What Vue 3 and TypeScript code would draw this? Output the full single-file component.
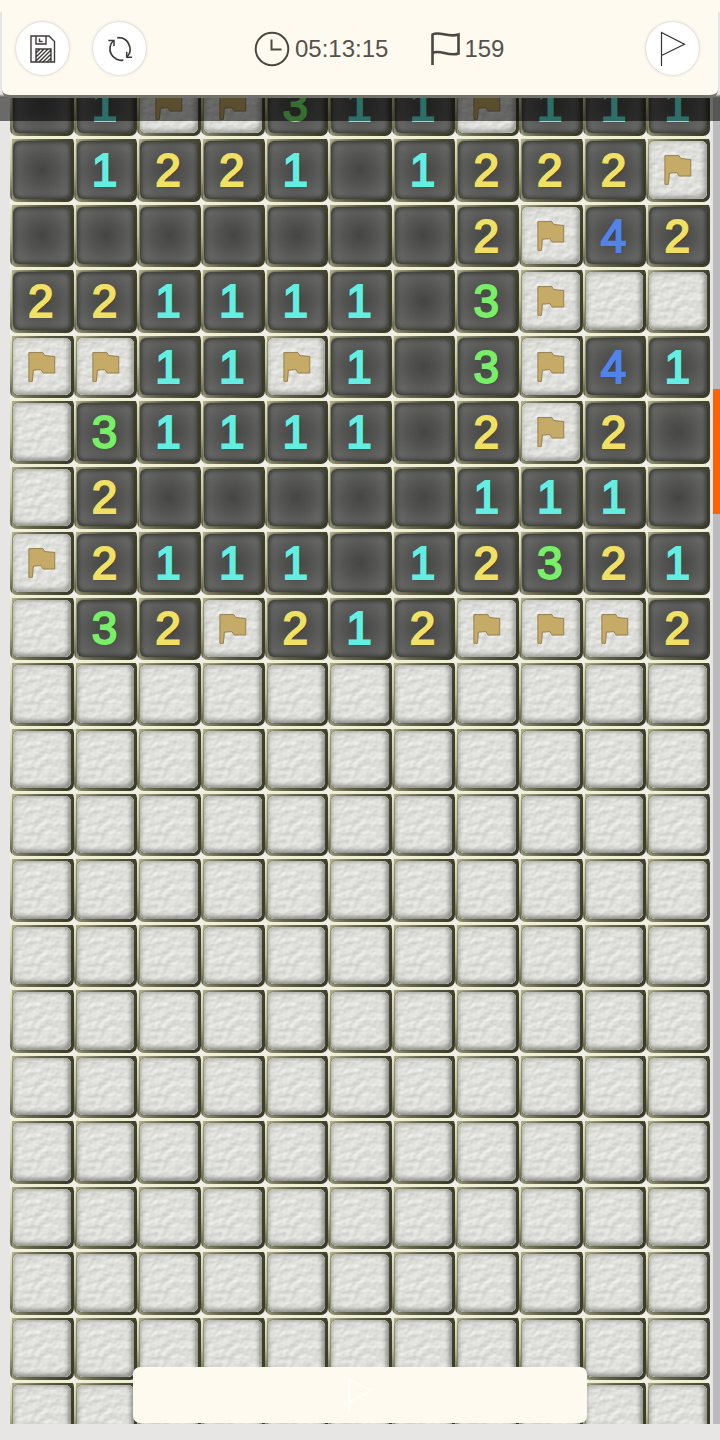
<script setup lang="ts">
import { computed, ref } from 'vue'

type Kind = 'covered' | 'flagged' | 'open'
interface Tile {
  id: number
  kind: Kind
  count: string
  label: string
}

const COLUMNS = 11
const rows: string[] = [
  ' 1FF311F111',
  ' 1221 1222F',
  '       2F42',
  '221111 3F##',
  'FF11F1 3F41',
  '#31111 2F2 ',
  '#2     111 ',
  'F2111 12321',
  '#32F212FFF2',
  ...Array.from({ length: 12 }, () => '#'.repeat(COLUMNS)),
]

const elapsed = ref('05:13:15')
const minesLeft = ref(159)

const tiles = computed<Tile[]>(() =>
  rows
    .join('')
    .split('')
    .map((mark, id) => {
      const kind: Kind = mark === '#' ? 'covered' : mark === 'F' ? 'flagged' : 'open'
      const count = kind === 'open' ? mark.trim() : ''
      const state = kind === 'open' ? count || 'empty' : kind
      const row = Math.floor(id / COLUMNS) + 1
      return { id, kind, count, label: `Row ${row}, column ${(id % COLUMNS) + 1}: ${state}` }
    }),
)
</script>

<template>
  <div class="game">
    <svg class="defs" width="0" height="0" aria-hidden="true">
      <filter id="stone" x="0" y="0" width="100%" height="100%" color-interpolation-filters="sRGB">
        <feTurbulence type="fractalNoise" baseFrequency="0.12 0.15" numOctaves="2" seed="8" />
        <feDiffuseLighting surfaceScale="0.5" diffuseConstant="1.01" lighting-color="#fffffb">
          <feDistantLight azimuth="235" elevation="60" />
        </feDiffuseLighting>
      </filter>
    </svg>

    <header class="top">
      <div class="panel">
        <button class="round" type="button" aria-label="Save">
          <svg width="28" height="30" viewBox="0 0 28 30">
            <g fill="none" stroke="#3c3b39" stroke-width="1.4">
              <path d="M2 2h18l5.500 5.500V28h-23.500z" />
              <path d="M7 2v8h10V2M10.500 4.500v3h3" />
              <path d="M7 28V15h15v13M7 19l4-4M7 23l8-8M7 27l12-12M10 28l12-12M14 28l8-8M18 28l4-4" />
            </g>
          </svg>
        </button>
        <button class="round" type="button" aria-label="Restart">
          <svg width="28" height="28" viewBox="0 0 28 28">
            <g fill="none" stroke="#3c3b39" stroke-width="1.7">
              <path d="M11.300 2.800A11.500 11.500 0 0 1 21 22" />
              <path d="M17.300 25.200A11.500 11.500 0 0 1 7.500 5.500" />
              <path d="M2.300 5.500h5.700v5.500M26 22.300h-5.300v-5.600" stroke-width="1.500" />
            </g>
          </svg>
        </button>
        <div class="stats">
          <div class="stat">
            <svg width="36" height="36" viewBox="0 0 36 36" aria-hidden="true">
              <g fill="none" stroke="#4a4843" stroke-width="2">
                <circle cx="18" cy="18" r="16.300" />
                <path d="M17.500 8.500v10h10" />
              </g>
            </svg>
            <span>{{ elapsed }}</span>
          </div>
          <div class="stat">
            <svg width="32" height="36" viewBox="0 0 32 36" aria-hidden="true">
              <path d="M2.500 34V3.500C9 -.5 18 7 28.500 3.500V22.500C18 26 10 18 2.500 22" fill="none" stroke="#4a4843" stroke-width="2.600" />
            </svg>
            <span>{{ minesLeft }}</span>
          </div>
        </div>
        <button class="round mode" type="button" aria-label="Flag mode">
          <svg width="30" height="36" viewBox="0 0 30 36">
            <path d="M3.500 35V1.500L26.500 13.300L3.500 24.500" fill="none" stroke="#343331" stroke-width="1.200" />
          </svg>
        </button>
      </div>
    </header>

    <main class="field">
      <div class="board">
        <button
          v-for="tile in tiles"
          :key="tile.id"
          type="button"
          class="tile"
          :class="[tile.kind, tile.count && `n${tile.count}`]"
          :aria-label="tile.label"
        >
          <span class="face">
            <svg v-if="tile.kind !== 'open'" class="rock" viewBox="0 0 58 59" preserveAspectRatio="none">
              <rect width="58" height="59" filter="url(#stone)" />
              <path
                v-if="tile.kind === 'flagged'"
                d="M16 15h14l2 3l10 1v17h-11.500l-2.500-3.500l-7.500 .5l-1 11.500h-3.500z"
                fill="#c6aa68"
                stroke="#94804f"
                stroke-width="1"
              />
            </svg>
            <template v-else>{{ tile.count }}</template>
          </span>
        </button>
      </div>
      <div class="shade"></div>
      <div class="track"><div class="thumb"></div></div>
      <button class="toggle" type="button" aria-label="Toggle flag mode">
        <svg width="30" height="36" viewBox="0 0 30 36">
          <path d="M4.500 35V2.500L27 13.500L4.500 25" fill="none" stroke="#fffefb" stroke-width="1.500" />
        </svg>
      </button>
    </main>
  </div>
</template>

<style>
body {
  background: #e8e6e5;
}
</style>

<style scoped>
.game {
  display: flex;
  flex-direction: column;
  height: 100vh;
  padding-bottom: 16px;
  box-sizing: border-box;
  background: #e8e6e5;
  font-family: "Liberation Sans", Arial, sans-serif;
}
.defs {
  position: absolute;
}
button {
  margin: 0;
  padding: 0;
  border: 0;
  font: inherit;
  cursor: pointer;
}
.top {
  position: relative;
  z-index: 2;
  padding: 12px 2px 0;
  background: linear-gradient(#fefaef 12px, #e8e6e5 12px, #e8e6e5 94px, #62615c 97px);
}
.panel {
  display: flex;
  align-items: center;
  padding: 10px 19px 20px 14px;
  border-bottom: 3px solid #72716a;
  border-radius: 0 0 8px 8px;
  background: #fefaef;
}
.round {
  display: grid;
  place-items: center;
  width: 53px;
  height: 53px;
  border-radius: 50%;
  background: #fff;
  box-shadow: 0 0 3px #bfbcb4;
}
.round + .round {
  margin-left: 24px;
}
.mode {
  margin-left: auto;
}
.stats {
  display: flex;
  gap: 42px;
  margin-left: 108px;
}
.stat {
  display: flex;
  align-items: center;
  gap: 5px;
  color: #55524d;
  font-size: 24px;
  line-height: 36px;
}
.stat + .stat {
  gap: 2px;
}
.field {
  position: relative;
  flex: 1;
  min-height: 0;
  overflow: hidden;
}
.board {
  display: grid;
  grid-template-columns: repeat(11, 1fr);
  margin: -27px 10px 0;
  background: #f0eee9;
}
.tile {
  display: grid;
  min-width: 0;
  aspect-ratio: 35 / 36;
  box-sizing: border-box;
  padding: 5px 3px 3px;
  border-radius: 7px;
  background:
    linear-gradient(#f1f0d4, #efeed2) 0 0 / 100% 3px no-repeat,
    linear-gradient(#efeed0, #c3c29c 50%, #55563c) 0 0 / 2px 100% no-repeat,
    linear-gradient(100deg, #b9b896, #67684e 40%, #3b3c2b 90%);
}
.face {
  position: relative;
  display: grid;
  place-items: center;
  min-width: 0;
  overflow: hidden;
  border-radius: 6px;
  background: radial-gradient(circle at 50% 50%, #454543, #545453 40%, #676766 80%);
  box-shadow: 0 0 2px #34352a;
  font-size: 46px;
  font-weight: 400;
  line-height: 50px;
  text-shadow: 1px 1px 1px rgba(20, 20, 20, 0.6);
  -webkit-text-stroke: 2px currentColor;
}
.open .face {
  padding: 0 2px 0 0;
}
.face::after {
  content: "";
  position: absolute;
  inset: 0;
  border-radius: 6px;
  box-shadow: inset 0 0 5px 1px #2d2d28;
}
.rock {
  display: block;
  width: 100%;
  height: 100%;
}
.covered .face,
.flagged .face {
  background: #dededb;
  box-shadow: 0 0 2px #4b4c3a;
}
.covered .face::after {
  box-shadow: inset -3px -3px 4px rgba(80, 80, 74, 0.55), inset 2px 2px 3px rgba(150, 150, 140, 0.5);
}
.flagged .face::after {
  box-shadow: inset -3px -3px 4px rgba(100, 100, 92, 0.5), inset 2px 2px 3px rgba(170, 170, 160, 0.4);
}
.n1 {
  color: #62efe2;
}
.n2 {
  color: #f0e063;
}
.n3 {
  color: #79ee69;
}
.n4 {
  color: #5183e8;
}
.shade {
  position: absolute;
  top: 0;
  left: 0;
  right: 0;
  height: 23px;
  z-index: 1;
  background: rgba(0, 0, 0, 0.54);
}
.track {
  position: absolute;
  top: 0;
  right: 0;
  bottom: 0;
  width: 7px;
  background: #bbbbbd;
}
.thumb {
  height: 125px;
  margin-top: 291px;
  background: #ff6200;
}
.toggle {
  position: absolute;
  left: 0;
  right: 0;
  bottom: 1px;
  display: grid;
  place-items: center;
  width: 63%;
  height: 56px;
  margin: 0 auto;
  border-radius: 7px;
  background: #fefaef;
}
</style>
